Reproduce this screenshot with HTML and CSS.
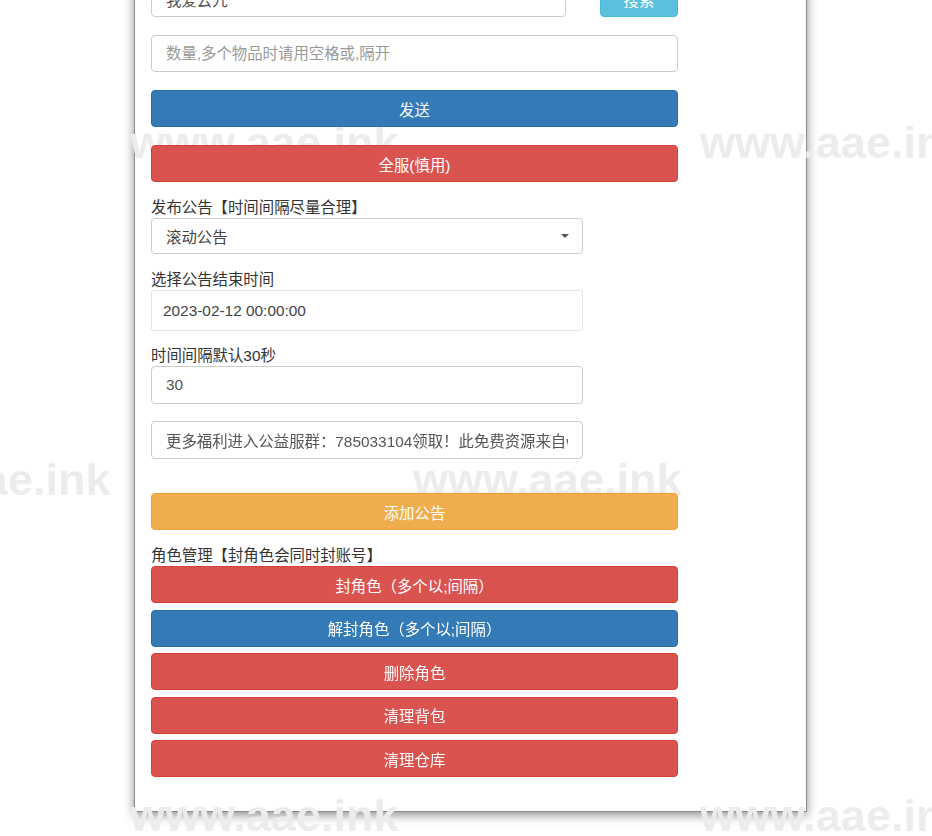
FILE: index.html
```html
<!DOCTYPE html>
<html>
    <head>
        <title>GM</title>
        <link rel="stylesheet" href="styles.css">
    </head>
    <body>
        <div class="panel">
            <div class="content">
                <div class="search-row">
                    <input class="form-control" type="text" value="我爱云九">
                    <button class="btn btn-info search-btn">搜索</button>
                </div>
                <input class="form-control gap" type="text" placeholder="数量,多个物品时请用空格或,隔开">
                <button class="btn btn-primary gap">发送</button>
                <button class="btn btn-danger gap">全服(慎用)</button>

                <label class="label">发布公告【时间间隔尽量合理】</label>
                <div class="select half">
                    <span>滚动公告</span>
                    <span class="caret"></span>
                </div>

                <label class="label">选择公告结束时间</label>
                <input class="form-control date half" type="text" value="2023-02-12 00:00:00">

                <label class="label label-tight">时间间隔默认30秒</label>
                <input class="form-control half" type="text" value="30">

                <input class="form-control half notice" type="text" value="更多福利进入公益服群：785033104领取！此免费资源来自www.aae.ink">

                <button class="btn btn-warning wide-gap">添加公告</button>

                <label class="label">角色管理【封角色会同时封账号】</label>
                <div class="btn-list">
                    <button class="btn btn-danger">封角色（多个以;间隔）</button>
                    <button class="btn btn-primary">解封角色（多个以;间隔）</button>
                    <button class="btn btn-danger">删除角色</button>
                    <button class="btn btn-danger">清理背包</button>
                    <button class="btn btn-danger">清理仓库</button>
                </div>
            </div>
        </div>

        <div class="watermarks">
            <span class="wm" style="left:130px;top:118px">www.aae.ink</span>
            <span class="wm" style="left:700px;top:118px">www.aae.ink</span>
            <span class="wm" style="left:-158px;top:455px">www.aae.ink</span>
            <span class="wm" style="left:413px;top:455px">www.aae.ink</span>
            <span class="wm" style="left:130px;top:791px">www.aae.ink</span>
            <span class="wm" style="left:700px;top:791px">www.aae.ink</span>
        </div>
    </body>
</html>
```

FILE: styles.css
```css
html, body {
    margin: 0;
    padding: 0;
    background: #fff;
    overflow: hidden;
}
body {
    font-family: "Liberation Sans", "Noto Sans CJK SC", sans-serif;
    font-size: 15.4px;
    color: #333;
    height: 836px;
}
.panel {
    width: 671px;
    margin: -40px 0 0 134px;
    padding: 20px 0 34px 0;
    background: #fff;
    border: 1px solid #8a8a8a;
    border-top: none;
    box-shadow: 0 3px 10px rgba(0, 0, 0, 0.45);
}
.content {
    width: 527px;
    margin-left: 16px;
    display: flex;
    flex-direction: column;
}
.search-row {
    display: flex;
    justify-content: space-between;
}
.search-row .form-control {
    width: 415px;
}
.search-row .search-btn {
    width: 78px;
}
.form-control {
    position: relative;
    z-index: 2;
    box-sizing: border-box;
    height: 37px;
    width: 100%;
    padding: 0 14px;
    font-family: "Liberation Sans", "Noto Sans CJK SC", sans-serif;
    font-size: 15.4px;
    color: #555;
    background: #fff;
    border: 1px solid #ccc;
    border-radius: 4px;
    outline: none;
}
.form-control::placeholder {
    color: #999;
}
.half {
    width: 432px;
}
.gap {
    margin-top: 18px;
}
.wide-gap {
    margin-top: 34px;
}
.btn {
    position: relative;
    z-index: 2;
    box-sizing: border-box;
    display: block;
    height: 37px;
    width: 100%;
    padding: 0;
    font-family: "Liberation Sans", "Noto Sans CJK SC", sans-serif;
    font-size: 15.4px;
    color: #fff;
    border: 1px solid transparent;
    border-radius: 4px;
    cursor: pointer;
}
.btn-primary {
    background: #337ab7;
    border-color: #2e6da4;
}
.btn-danger {
    background: #d9534f;
    border-color: #d43f3a;
}
.btn-warning {
    background: #f0ad4e;
    border-color: #eea236;
}
.btn-info {
    background: #5bc0de;
    border-color: #46b8da;
}
.label {
    display: block;
    margin-top: 16px;
    height: 20px;
    line-height: 20px;
    color: #333;
}
.label-tight {
    margin-top: 15px;
}
.select {
    position: relative;
    z-index: 2;
    box-sizing: border-box;
    height: 36px;
    padding: 0 14px;
    display: flex;
    align-items: center;
    justify-content: space-between;
    color: #444;
    background: #fff;
    border: 1px solid #ccc;
    border-radius: 4px;
}
.caret {
    width: 0;
    height: 0;
    border-left: 4px solid transparent;
    border-right: 4px solid transparent;
    border-top: 4px solid #555;
    margin-right: -1px;
}
.date {
    height: 41px;
    padding-left: 11px;
    border-color: #e4e4e4;
    border-radius: 2px;
    color: #444;
}
.notice {
    margin-top: 17px;
    height: 38px;
}
.label-tight + .form-control {
    height: 38px;
}
.btn-list {
    display: flex;
    flex-direction: column;
    gap: 6.5px;
}
.watermarks {
    position: fixed;
    z-index: 1;
    left: 0;
    top: 0;
    width: 100%;
    height: 100%;
    pointer-events: none;
}
.wm {
    position: absolute;
    font-family: "Liberation Sans", sans-serif;
    font-weight: bold;
    font-size: 45px;
    line-height: 50px;
    color: #ececec;
    white-space: nowrap;
}
```
